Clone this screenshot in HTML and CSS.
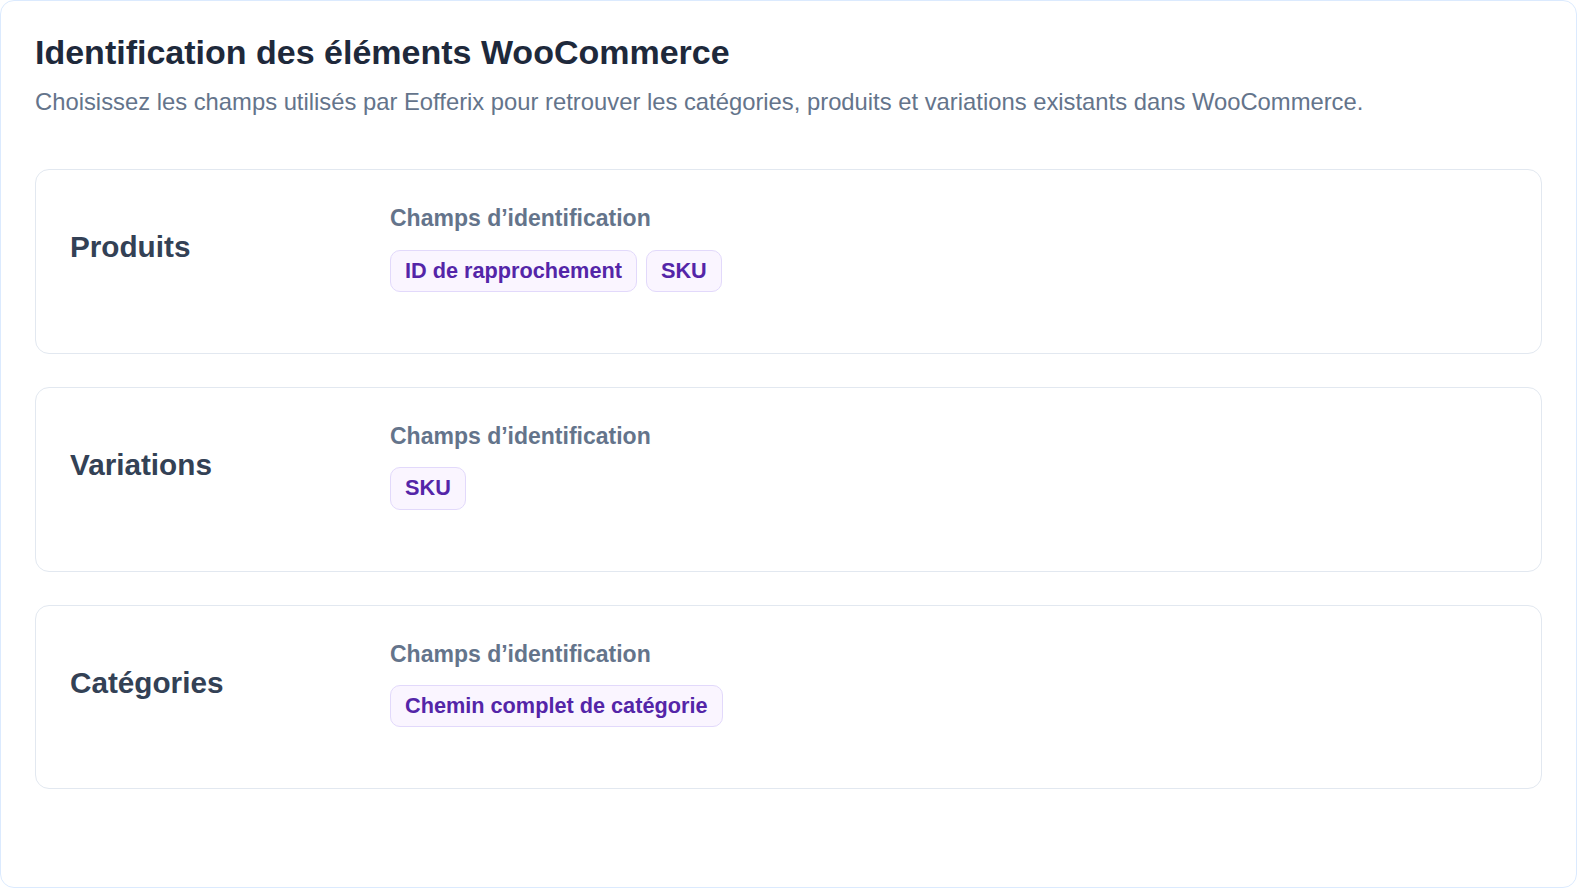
FILE: index.html
```html
<!DOCTYPE html>
<html lang="fr">
<head>
  <meta charset="UTF-8" />
  <meta name="viewport" content="width=device-width, initial-scale=1.0"/>
  <title>Identification des éléments WooCommerce</title>
  <link rel="stylesheet" href="styles.css">
</head>
<body>
  <div class="panel">
    <h1 class="panel-title">Identification des éléments WooCommerce</h1>
    <p class="panel-desc">Choisissez les champs utilisés par Eofferix pour retrouver les catégories, produits et variations existants dans WooCommerce.</p>

    <div class="entity-list">
      <!-- Produits -->
      <section class="entity-card">
        <h2 class="entity-name">Produits</h2>
        <div class="entity-fields">
          <div class="fields-label">Champs d’identification</div>
          <div class="chips">
            <span class="chip">ID de rapprochement</span>
            <span class="chip">SKU</span>
          </div>
        </div>
      </section>

      <!-- Variations -->
      <section class="entity-card">
        <h2 class="entity-name">Variations</h2>
        <div class="entity-fields">
          <div class="fields-label">Champs d’identification</div>
          <div class="chips">
            <span class="chip">SKU</span>
          </div>
        </div>
      </section>

      <!-- Catégories -->
      <section class="entity-card">
        <h2 class="entity-name">Catégories</h2>
        <div class="entity-fields">
          <div class="fields-label">Champs d’identification</div>
          <div class="chips">
            <span class="chip">Chemin complet de catégorie</span>
          </div>
        </div>
      </section>
    </div>
  </div>
</body>
</html>
```

FILE: styles.css
```css
html, body {
  margin: 0;
  padding: 0;
  background: #ffffff;
  font-family: "Liberation Sans", Arial, sans-serif;
}

.panel {
  box-sizing: border-box;
  height: 100vh;
  border: 1px solid #dbeafe;
  border-radius: 14px;
  padding: 31px 34px 28px;
  background: #ffffff;
}

.panel-title {
  margin: 0;
  font-size: 34px;
  line-height: 1.2;
  font-weight: 700;
  color: #1e293b;
}

.panel-desc {
  margin: 11px 0 0;
  font-size: 23.8px;
  line-height: 1.5;
  color: #64748b;
}

.entity-list {
  display: flex;
  flex-direction: column;
  gap: 33px;
  margin-top: 50px;
}

.entity-card {
  display: grid;
  grid-template-columns: 320px 1fr;
  align-items: center;
  border: 1px solid #e2e8f0;
  border-radius: 14px;
  padding: 32px 34px 61px;
}

.entity-name {
  margin: 0;
  font-size: 29.7px;
  line-height: 1.2;
  font-weight: 700;
  color: #334155;
}

.fields-label {
  font-size: 23px;
  line-height: 1.4;
  font-weight: 700;
  color: #64748b;
}

.chips {
  display: flex;
  flex-wrap: wrap;
  gap: 9px;
  margin-top: 15px;
}

.chip {
  padding: 5px 14px;
  font-size: 21.7px;
  line-height: 1.4;
  font-weight: 700;
  color: #5425a8;
  background: #faf5ff;
  border: 1px solid #e2d9fb;
  border-radius: 10px;
}
```
